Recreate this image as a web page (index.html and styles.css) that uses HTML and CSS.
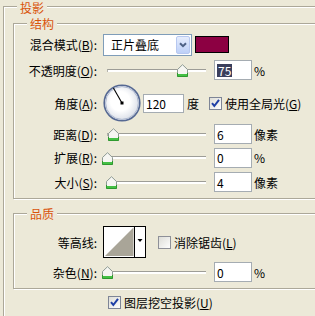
FILE: index.html
```html
<!DOCTYPE html>
<html lang="zh-CN">
<head>
<meta charset="utf-8">
<title>投影</title>
<link rel="stylesheet" href="styles.css">
</head>
<body>
<div class="group outer">
  <div class="legend legend-top">投影</div>
  <div class="group inner">
    <div class="legend">结构</div>
    <div class="rows rows-struct">
      <div class="row">
        <span class="label">混合模式(<u>B</u>):</span>
        <div class="select">
          <span>正片叠底</span>
          <span class="select-btn"><svg width="8" height="6" viewBox="0 0 8 6"><path d="M1 1.2 L4 4.2 L7 1.2" fill="none" stroke="#4D6185" stroke-width="2"/></svg></span>
        </div>
        <div class="swatch"></div>
      </div>
      <div class="row">
        <span class="label">不透明度(<u>O</u>):</span>
        <div class="slider"><div class="track"></div><svg class="thumb" style="left:74px" width="11" height="13" viewBox="0 0 11 13"><path d="M5.5 .7 L10.5 5.5 V12.5 H.5 V5.5 Z" fill="#F6F6F2" stroke="#8E9A94"/><path d="M1 10 H10 V12 H1 Z" fill="#45C045"/><path d="M.5 9 V12.5 H10.5 V9" fill="none" stroke="#2E9A2E"/></svg></div>
        <div class="num"><span class="sel">75</span></div>
        <span class="unit">%</span>
      </div>
      <div class="row">
        <span class="label">角度(<u>A</u>):</span>
        <svg class="dial" width="38" height="38" viewBox="0 0 38 38">
          <defs><radialGradient id="dg" cx="0.45" cy="0.45" r="0.6"><stop offset="0.45" stop-color="#FFFFFF"/><stop offset="1" stop-color="#D3D8E3"/></radialGradient></defs>
          <circle cx="19" cy="19" r="17.8" fill="url(#dg)" stroke="#566993" stroke-width="1.6"/>
          <circle cx="19" cy="19" r="16.4" fill="none" stroke="#AEB9D0" stroke-width="1"/>
          <line x1="19" y1="19" x2="10.4" y2="4" stroke="#000" stroke-width="1.1"/>
          <rect x="17.5" y="17.5" width="3" height="3" fill="#000"/>
        </svg>
        <div class="num num-angle">120</div>
        <span class="deg">度</span>
        <svg class="cb global" width="13" height="13" viewBox="0 0 13 13"><defs><linearGradient id="cg1" x1="0" y1="0" x2="1" y2="1"><stop offset="0" stop-color="#DCDCD6"/><stop offset="1" stop-color="#FFFFFF"/></linearGradient></defs><rect x=".5" y=".5" width="12" height="12" fill="url(#cg1)" stroke="#7E8596"/><path d="M3 6.2 L5.3 9 L10 2.8" fill="none" stroke="#1E3FA6" stroke-width="2"/></svg>
        <span class="check-label">使用全局光(<u>G</u>)</span>
      </div>
      <div class="row">
        <span class="label">距离(<u>D</u>):</span>
        <div class="slider"><div class="track"></div><svg class="thumb" style="left:5px" width="11" height="13" viewBox="0 0 11 13"><path d="M5.5 .7 L10.5 5.5 V12.5 H.5 V5.5 Z" fill="#F6F6F2" stroke="#8E9A94"/><path d="M1 10 H10 V12 H1 Z" fill="#45C045"/><path d="M.5 9 V12.5 H10.5 V9" fill="none" stroke="#2E9A2E"/></svg></div>
        <div class="num">6</div>
        <span class="unit">像素</span>
      </div>
      <div class="row">
        <span class="label">扩展(<u>R</u>):</span>
        <div class="slider"><div class="track"></div><svg class="thumb" style="left:-1px" width="11" height="13" viewBox="0 0 11 13"><path d="M5.5 .7 L10.5 5.5 V12.5 H.5 V5.5 Z" fill="#F6F6F2" stroke="#8E9A94"/><path d="M1 10 H10 V12 H1 Z" fill="#45C045"/><path d="M.5 9 V12.5 H10.5 V9" fill="none" stroke="#2E9A2E"/></svg></div>
        <div class="num">0</div>
        <span class="unit">%</span>
      </div>
      <div class="row">
        <span class="label">大小(<u>S</u>):</span>
        <div class="slider"><div class="track"></div><svg class="thumb" style="left:3px" width="11" height="13" viewBox="0 0 11 13"><path d="M5.5 .7 L10.5 5.5 V12.5 H.5 V5.5 Z" fill="#F6F6F2" stroke="#8E9A94"/><path d="M1 10 H10 V12 H1 Z" fill="#45C045"/><path d="M.5 9 V12.5 H10.5 V9" fill="none" stroke="#2E9A2E"/></svg></div>
        <div class="num">4</div>
        <span class="unit">像素</span>
      </div>
    </div>
  </div>
  <div class="group inner quality">
    <div class="legend">品质</div>
    <div class="rows rows-quality">
      <div class="row">
        <span class="label">等高线:</span>
        <svg class="contour" width="43" height="32" viewBox="0 0 43 32">
          <rect x=".5" y=".5" width="42" height="31" fill="#FFFFFF" stroke="#000"/>
          <path d="M2 30 L30.5 1.5 L30.5 30 Z" fill="#A9A598"/>
          <line x1="31.5" y1="0" x2="31.5" y2="32" stroke="#000"/>
          <path d="M34.5 13 H39.5 L37 16 Z" fill="#000"/>
        </svg>
        <svg class="cb" width="13" height="13" viewBox="0 0 13 13"><defs><linearGradient id="cg2" x1="0" y1="0" x2="1" y2="1"><stop offset="0" stop-color="#DCDCD6"/><stop offset="1" stop-color="#FFFFFF"/></linearGradient></defs><rect x=".5" y=".5" width="12" height="12" fill="url(#cg2)" stroke="#8E9098"/></svg>
        <span class="check-label">消除锯齿(<u>L</u>)</span>
      </div>
      <div class="row">
        <span class="label">杂色(<u>N</u>):</span>
        <div class="slider"><div class="track"></div><svg class="thumb" style="left:-1px" width="11" height="13" viewBox="0 0 11 13"><path d="M5.5 .7 L10.5 5.5 V12.5 H.5 V5.5 Z" fill="#F6F6F2" stroke="#8E9A94"/><path d="M1 10 H10 V12 H1 Z" fill="#45C045"/><path d="M.5 9 V12.5 H10.5 V9" fill="none" stroke="#2E9A2E"/></svg></div>
        <div class="num">0</div>
        <span class="unit">%</span>
      </div>
    </div>
  </div>
  <div class="knock">
    <svg class="cb" width="13" height="13" viewBox="0 0 13 13"><defs><linearGradient id="cg3" x1="0" y1="0" x2="1" y2="1"><stop offset="0" stop-color="#DCDCD6"/><stop offset="1" stop-color="#FFFFFF"/></linearGradient></defs><rect x=".5" y=".5" width="12" height="12" fill="url(#cg3)" stroke="#7E8596"/><path d="M3 6.2 L5.3 9 L10 2.8" fill="none" stroke="#1E3FA6" stroke-width="2"/></svg>
    <span class="check-label">图层挖空投影(<u>U</u>)</span>
  </div>
</div>
</body>
</html>
```

FILE: styles.css
```css
* { box-sizing: border-box; }
html, body { margin: 0; padding: 0; }
body {
  width: 315px;
  height: 316px;
  overflow: hidden;
  background: #ECE9D8;
  font-family: "Noto Sans CJK SC", "Noto Sans", sans-serif;
  font-size: 12px;
  line-height: 13px;
  color: #000;
}
u { text-decoration: underline; text-underline-offset: 1px; }

.group {
  border: 1px solid #ACA899;
  box-shadow: inset 1px 1px 0 #FFFFFF, 1px 1px 0 #FFFFFF;
}
.outer { margin: 6px 0 0 3px; width: 360px; height: 340px; }
.inner { margin: 9px 0 0 9px; width: 340px; }
.quality { margin-top: 14px; }

.legend {
  width: max-content;
  height: 13px;
  margin: -7px 0 0 13px;
  padding: 0 3px;
  background: #ECE9D8;
  color: #D9540B;
  white-space: nowrap;
}
.legend-top { height: 14px; padding-top: 1px; }

.rows { display: grid; }
.rows-struct { grid-template-rows: 25px 26px 40px 22px 25px 24px; padding: 2px 0 4px; }
.rows-quality { grid-template-rows: 32px 24px; row-gap: 2px; padding: 6px 0 4px; }

.row { display: flex; align-items: center; white-space: nowrap; }
.label { flex: none; width: 83px; margin-right: 6px; text-align: right; }

.select {
  flex: none;
  display: flex;
  align-items: center;
  justify-content: space-between;
  width: 89px;
  height: 22px;
  border: 1px solid #7F9DB9;
  background: #FFFFFF;
  padding: 1px 1px 1px 7px;
}
.select-btn {
  display: flex;
  align-items: center;
  justify-content: center;
  width: 14px;
  height: 18px;
  border: 1px solid #B7C8F0;
  border-radius: 2px;
  background: linear-gradient(#E6EDFD, #BDD0F8);
}
.swatch {
  flex: none;
  width: 34px;
  height: 17px;
  margin-left: 3px;
  border: 1px solid #000;
  background: #8C0042;
}

.slider {
  flex: none;
  position: relative;
  display: flex;
  align-items: center;
  width: 111px;
  height: 20px;
}
.track {
  width: 99px;
  height: 3px;
  margin-left: 4px;
  border-top: 1px solid #9D9D97;
  border-left: 1px solid #B5B5AE;
  background: #FFFFFF;
}
.thumb { position: absolute; top: 4px; }

.num {
  flex: none;
  display: flex;
  align-items: center;
  width: 38px;
  height: 20px;
  padding-left: 2px;
  border: 1px solid #A5ACB2;
  background: #FFFFFF;
}
.num-angle { width: 41px; height: 19px; margin-left: 2px; }
.sel { background: #3A3F5C; color: #FFFFFF; padding: 0 1px; }
.unit { margin-left: 2px; }

.dial { flex: none; display: block; }
.deg { margin-left: 3px; }
.cb { flex: none; display: block; }
.global { margin-left: 10px; }
.check-label { margin-left: 3px; }
.contour { flex: none; display: block; margin-right: 12px; }

.knock {
  display: flex;
  align-items: center;
  height: 14px;
  margin: 6px 0 0 104px;
}
```
